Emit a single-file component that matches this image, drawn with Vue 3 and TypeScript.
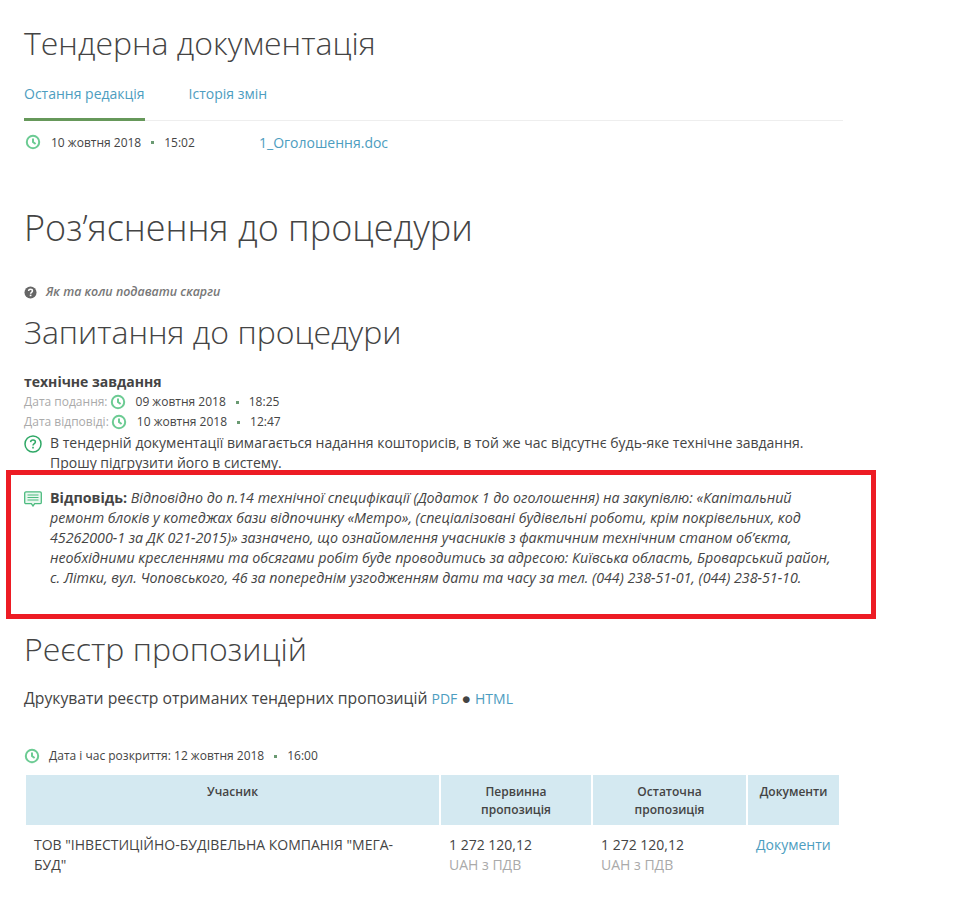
<script setup lang="ts">
interface Bid {
  name: string
  first: string
  last: string
}

const bids: Bid[] = [
  { name: 'ТОВ "ІНВЕСТИЦІЙНО-БУДІВЕЛЬНА КОМПАНІЯ "МЕГА-БУД"', first: '1 272 120,12', last: '1 272 120,12' },
]
</script>

<template>
  <div class="page">
    <h2 class="title-docs">Тендерна документація</h2>

    <div class="tabs">
      <a class="tab active">Остання редакція</a>
      <a class="tab">Історія змін</a>
    </div>

    <div class="doc-row">
      <span class="date">
        <svg class="clock" viewBox="0 0 16 16"><circle cx="8" cy="8" r="6.2" /><path d="M8 4.4V8l2.6 2" /></svg>
        <span class="date-text">10 жовтня 2018</span><i class="dot"></i><span>15:02</span>
      </span>
      <a class="doc-link">1_Оголошення.doc</a>
    </div>

    <h1 class="title-main">Роз’яснення до процедури</h1>

    <div class="complaint">
      <svg class="help" viewBox="0 0 14 14">
        <circle cx="7" cy="7" r="6.5" fill="#666" />
        <path d="M4.9 5.4C5 4.2 5.9 3.6 7 3.6s2.1.7 2.1 1.8c0 1.500-2 1.500-2 3" fill="none" stroke="#fff" stroke-width="1.6" />
        <rect x="6.200" y="9.300" width="1.800" height="1.700" fill="#fff" />
      </svg>
      <em>Як та коли подавати скарги</em>
    </div>

    <h2 class="title-questions">Запитання до процедури</h2>

    <div class="question">
      <div class="q-title">технічне завдання</div>
      <div class="q-date">
        <span class="muted">Дата подання:</span>
        <svg class="clock" viewBox="0 0 16 16"><circle cx="8" cy="8" r="6.2" /><path d="M8 4.4V8l2.6 2" /></svg>
        <span class="date-text">09 жовтня 2018</span><i class="dot"></i><span>18:25</span>
      </div>
      <div class="q-date">
        <span class="muted">Дата відповіді:</span>
        <svg class="clock" viewBox="0 0 16 16"><circle cx="8" cy="8" r="6.2" /><path d="M8 4.4V8l2.6 2" /></svg>
        <span class="date-text">10 жовтня 2018</span><i class="dot"></i><span>12:47</span>
      </div>
      <div class="q-text">
        <svg class="q-icon" viewBox="0 0 18 18">
          <circle cx="9" cy="9" r="8" fill="none" stroke="#2fa866" stroke-width="1.500" />
          <path d="M6.600 7.100C6.700 5.700 7.700 5 9 5s2.400.8 2.400 2c0 1.700-2.400 1.700-2.400 3.500" fill="none" stroke="#2fa866" stroke-width="1.500" />
          <rect x="8.200" y="11.800" width="1.600" height="1.700" fill="#2fa866" />
        </svg>
        <p>В тендерній документації вимагається надання кошторисів, в той же час відсутнє будь-яке технічне завдання. Прошу підгрузити його в систему.</p>
      </div>
      <div class="answer">
        <svg class="a-icon" viewBox="0 0 18 16">
          <path d="M2 .8h14A1.300 1.300 0 0 1 17.300 2.100v9.300a1.300 1.300 0 0 1-1.300 1.300h-5.300L9 15l-1.700-2.300H2A1.300 1.300 0 0 1 .7 11.400V2.100A1.300 1.300 0 0 1 2 .8z" fill="#e9f7ef" stroke="#4cbb7f" stroke-width="1.300" />
          <path d="M3.500 4h11M3.500 6.500h11M3.500 9h11" stroke="#4cbb7f" stroke-width="1.200" />
        </svg>
        <p><b>Відповідь:</b> <em>Відповідно до п.14 технічної специфікації (Додаток 1 до оголошення) на закупівлю: «Капітальний ремонт блоків у котеджах бази відпочинку «Метро», (спеціалізовані будівельні роботи, крім покрівельних, код 45262000-1 за ДК 021-2015)» зазначено, що ознайомлення учасників з фактичним технічним станом об’єкта, необхідними кресленнями та обсягами робіт буде проводитись за адресою: Київська область, Броварський район, с. Літки, вул. Чоповського, 46 за попереднім узгодженням дати та часу за тел. (044) 238-51-01, (044) 238-51-10.</em></p>
        <div class="red-frame"></div>
      </div>
    </div>

    <h2 class="title-registry">Реєстр пропозицій</h2>
    <div class="print">Друкувати реєстр отриманих тендерних пропозицій <a>PDF</a> ● <a>HTML</a></div>

    <div class="open-date">
      <svg class="clock" viewBox="0 0 16 16"><circle cx="8" cy="8" r="6.2" /><path d="M8 4.4V8l2.6 2" /></svg>
      <span class="date-text">Дата і час розкриття: 12 жовтня 2018</span><i class="dot"></i><span>16:00</span>
    </div>

    <table class="bids">
      <thead>
        <tr>
          <th class="col-name">Учасник</th>
          <th class="col-first">Первинна пропозиція</th>
          <th class="col-last">Остаточна пропозиція</th>
          <th class="col-docs">Документи</th>
        </tr>
      </thead>
      <tbody>
        <tr v-for="bid in bids" :key="bid.name">
          <td>{{ bid.name }}</td>
          <td>{{ bid.first }}<br /><span class="currency">UAH з ПДВ</span></td>
          <td>{{ bid.last }}<br /><span class="currency">UAH з ПДВ</span></td>
          <td><a>Документи</a></td>
        </tr>
      </tbody>
    </table>
  </div>
</template>

<style>
html, body {
  margin: 0;
  background: #fff;
}
</style>

<style scoped>
.page {
  box-sizing: border-box;
  width: 980px;
  height: 909px;
  overflow: hidden;
  padding-left: 24px;
  font-family: "Open Sans", sans-serif;
  font-size: 14px;
  color: #444;
}

h1, h2 {
  margin: 0;
  font-weight: 300;
  color: #444;
}

a {
  color: #4d9dc0;
}

.title-docs {
  padding-top: 23px;
  font-size: 32px;
  line-height: 40px;
}

/* --- TABS --- */
.tabs {
  display: flex;
  gap: 44px;
  width: 819px;
  margin-top: 14px;
  border-bottom: 1px solid #eee;
}

.tab {
  padding: 7px 0 16px;
  line-height: 20px;
  margin-bottom: -1px;
}

.tab.active {
  border-bottom: 3px solid #66985a;
  padding-bottom: 14px;
}

.doc-row {
  display: flex;
  align-items: center;
  height: 22px;
  margin-top: 10px;
}

.date {
  display: flex;
  align-items: center;
  width: 235px;
  font-size: 12px;
}

.doc-link {
  font-size: 14px;
}

.clock {
  width: 16px;
  height: 16px;
  flex: none;
  fill: none;
  stroke: #6ccb93;
  stroke-width: 2;
  margin-left: 1px;
}

.date .date-text {
  margin-left: 10px;
}

.dot {
  width: 3px;
  height: 3px;
  background: #6a9a72;
  margin: 0 10px;
  flex: none;
}

.title-main {
  margin-top: 50px;
  font-size: 36px;
  line-height: 50px;
}

.complaint {
  display: flex;
  align-items: center;
  gap: 9px;
  margin-top: 30px;
  font-size: 12.4px;
  font-weight: 600;
  color: #777;
  line-height: 18px;
}

.help {
  width: 13px;
  height: 13px;
}

.title-questions {
  margin-top: 9px;
  font-size: 32px;
  line-height: 44px;
}

/* --- QUESTION --- */
.question {
  margin-top: 18px;
}

.q-title {
  font-weight: 700;
  line-height: 20px;
}

.q-date {
  display: flex;
  align-items: center;
  font-size: 12px;
  line-height: 20px;
}

.q-date .clock {
  margin: 0 10px 0 2px;
}

.muted {
  color: #aaa;
}

.q-text {
  display: flex;
  gap: 8px;
  margin-top: 1px;
}

.q-text p,
.answer p {
  width: 792px;
  margin: 0;
  line-height: 20px;
}

.q-icon {
  width: 18px;
  height: 18px;
  flex: none;
  margin-top: 2px;
}

.answer {
  position: relative;
  display: flex;
  gap: 8px;
  margin-top: 15px;
}

.answer p {
  font-size: 14.25px;
}

.a-icon {
  width: 18px;
  height: 16px;
  flex: none;
  margin-top: 3px;
}

.red-frame {
  position: absolute;
  left: -18px;
  top: -18px;
  width: 870px;
  height: 149px;
  box-sizing: border-box;
  border: 5px solid #ed1c24;
}

/* --- REGISTRY --- */
.title-registry {
  margin-top: 39px;
  font-size: 32px;
  line-height: 44px;
}

.print {
  margin-top: 16px;
  font-size: 15.75px;
  line-height: 22px;
}

.print a {
  font-size: 14px;
}

.open-date {
  display: flex;
  align-items: center;
  margin-top: 36px;
  font-size: 12px;
  line-height: 20px;
}

.open-date .clock {
  margin-left: 0;
  margin-right: 9px;
}

.bids {
  border-collapse: separate;
  border-spacing: 2px;
  margin-top: 7px;
  width: 817px;
  table-layout: fixed;
}

.bids th {
  background: #d4e9f1;
  font-size: 12px;
  font-weight: 600;
  line-height: 18px;
  height: 50px;
  padding: 8px 16px 0;
  box-sizing: border-box;
  vertical-align: top;
}

.bids th.col-docs {
  padding: 8px 4px 0;
}

.col-name { width: 413px; }
.col-first { width: 150px; }
.col-last { width: 153px; }
.col-docs { width: 91px; }

.bids td {
  padding: 8px 16px 8px 8px;
  line-height: 20px;
  vertical-align: top;
}

.bids td:last-child {
  padding-right: 4px;
}

.currency {
  color: #aaa;
}
</style>
